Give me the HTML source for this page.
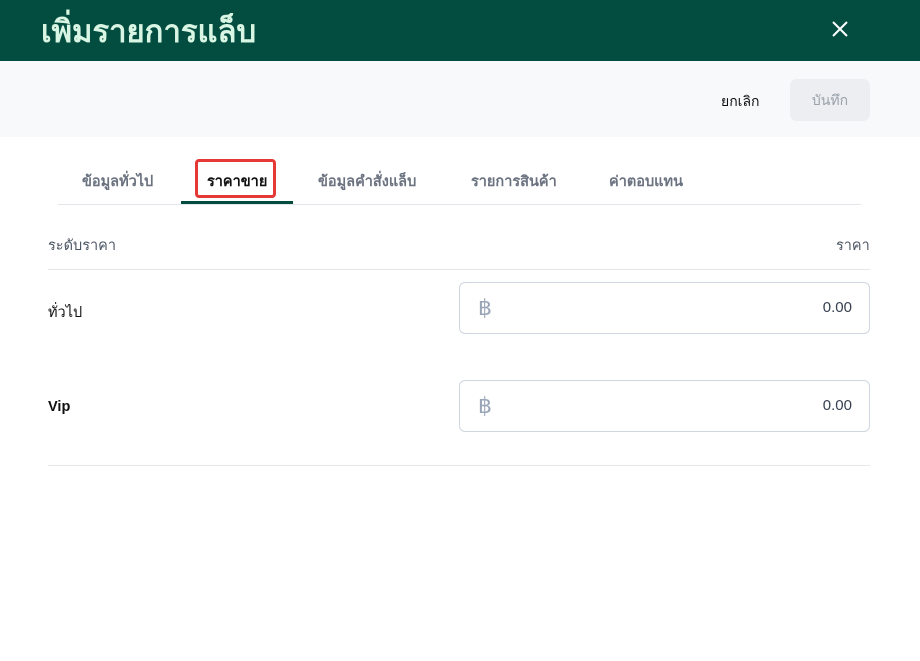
<!DOCTYPE html>
<html><head><meta charset="utf-8"><style>
*{margin:0;padding:0;box-sizing:border-box}
body{width:920px;height:661px;background:#fff;font-family:"Liberation Sans","DejaVu Sans",sans-serif;position:relative;overflow:hidden;color:#1f2937}
.hdr{position:absolute;left:0;top:0;width:920px;height:61px;background:#024d40}
.hdr h1{position:absolute;left:41px;top:12px;font-size:31px;font-weight:bold;color:#d9f5e4;line-height:40px}
.x{position:absolute;left:829px;top:18px;width:22px;height:22px}
.bar{position:absolute;left:0;top:61px;width:920px;height:76px;background:#f8f9fb}
.cancel{position:absolute;left:721px;top:91px;font-size:14px;color:#111}
.save{position:absolute;left:790px;top:79px;width:80px;height:42px;background:#eceef1;border-radius:7px;color:#9aa1ab;font-size:14px;text-align:center;line-height:42px}
.tabs{position:absolute;left:58px;top:204px;width:803px;height:1px;background:#e3e6ea}
.tab{position:absolute;top:170px;font-size:14.5px;color:#6b7280;font-weight:bold}
.act{position:absolute;left:181px;top:201px;width:112px;height:3px;background:#024d40}
.red{position:absolute;left:195px;top:159px;width:81px;height:39px;border:3px solid #e53935;border-radius:4px}
.lbl{position:absolute;font-size:14.5px;color:#4b5563}
.line{position:absolute;left:48px;width:822px;height:1px;background:#e5e7eb}
.inp{position:absolute;left:459px;width:411px;height:52px;border:1px solid #cfd6e0;border-radius:6px}
.inp .b{position:absolute;left:18px;top:12px;font-size:22px;color:#9aa6b8}
.inp .v{position:absolute;right:17px;top:16px;font-size:15px;color:#374151}
</style></head><body>
<div class="hdr"><h1>เพิ่มรายการแล็บ</h1>
<svg class="x" viewBox="0 0 22 22"><path d="M4 4L18 18M18 4L4 18" stroke="#fff" stroke-width="2"/></svg></div>
<div class="bar"></div>
<div class="cancel">ยกเลิก</div>
<div class="save">บันทึก</div>
<div class="tab" style="left:82px">ข้อมูลทั่วไป</div>
<div class="tab" style="left:207px;color:#111">ราคาขาย</div>
<div class="tab" style="left:318px">ข้อมูลคำสั่งแล็บ</div>
<div class="tab" style="left:471px">รายการสินค้า</div>
<div class="tab" style="left:609px">ค่าตอบแทน</div>
<div class="tabs"></div><div class="act"></div><div class="red"></div>
<div class="lbl" style="left:48px;top:234px">ระดับราคา</div>
<div class="lbl" style="left:836px;top:234px">ราคา</div>
<div class="line" style="top:269px"></div>
<div class="lbl" style="left:48px;top:301px;color:#111">ทั่วไป</div>
<div class="inp" style="top:282px"><span class="b">฿</span><span class="v">0.00</span></div>
<div class="lbl" style="left:48px;top:399px;color:#111;font-weight:bold">Vip</div>
<div class="inp" style="top:380px"><span class="b">฿</span><span class="v">0.00</span></div>
<div class="line" style="top:465px"></div>
</body></html>
